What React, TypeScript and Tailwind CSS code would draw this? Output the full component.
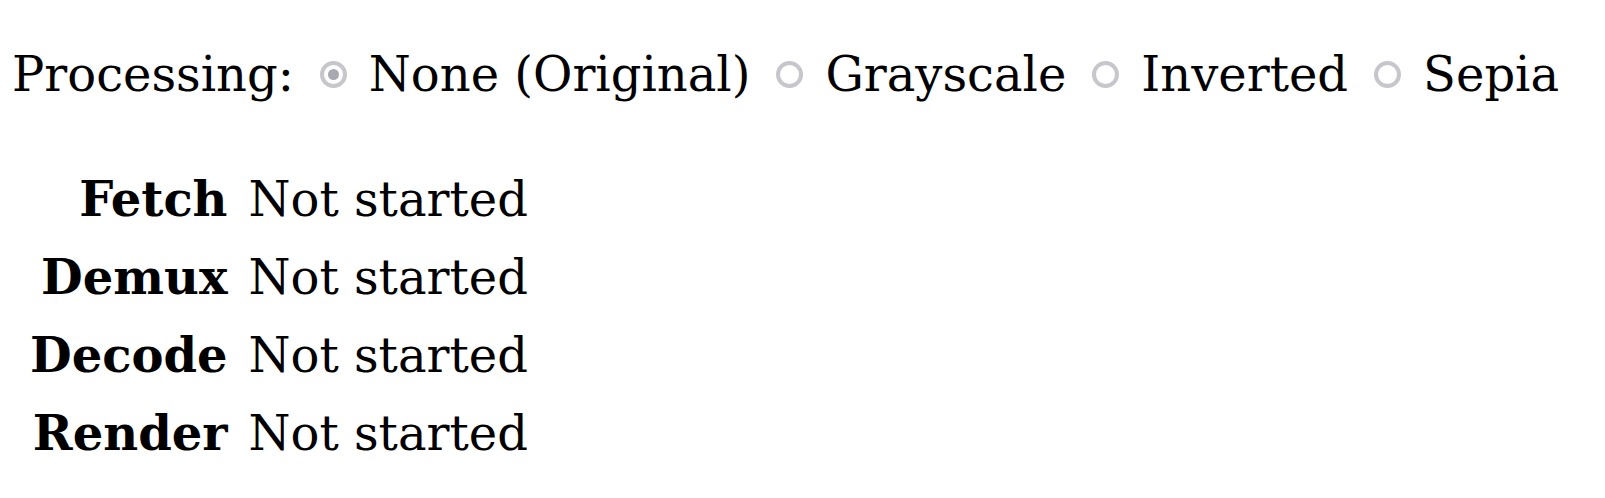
import React from "react";

function Radio({ checked }: { checked?: boolean }) {
  return (
    <span className="inline-flex h-[27px] w-[27px] shrink-0 items-center justify-center rounded-full border-[4px] border-[#c6c6cc] bg-white">
      {checked ? <span className="h-[11px] w-[11px] rounded-full bg-[#a8a8b3]" /> : null}
    </span>
  );
}

export default function App() {
  const rows = ["Fetch", "Demux", "Decode", "Render"];
  const opts = ["None (Original)", "Grayscale", "Inverted", "Sepia"];
  return (
    <div className="bg-white text-black pl-[12px] pt-[46px] text-[48px] leading-[56px] whitespace-nowrap" style={{ fontFamily: '"DejaVu Serif", serif' }}>
      <div className="flex items-center">
        <span>Processing:</span>
        {opts.map((o, i) => (
          <label key={o} className="flex items-center">
            <span className="ml-[26px] mr-[22px] flex items-center"><Radio checked={i === 0} /></span>
            <span>{o}</span>
          </label>
        ))}
      </div>
      <table className="ml-[18px] mt-[58px] border-collapse">
        <tbody>
          {rows.map((r) => (
            <tr key={r}>
              <th className="py-[11px] pr-[21px] text-right font-bold">{r}</th>
              <td className="py-[11px]">Not started</td>
            </tr>
          ))}
        </tbody>
      </table>
    </div>
  );
}
